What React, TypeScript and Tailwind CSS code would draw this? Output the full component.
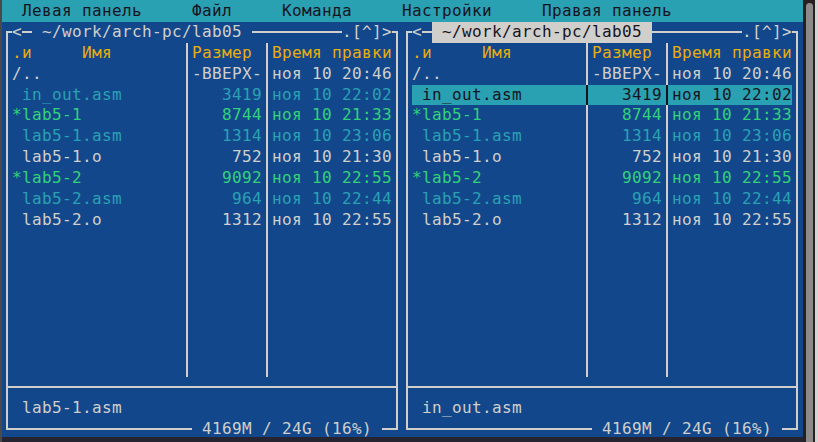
import React from "react";

type FileRow = { name: string; size: string; time: string; color: string };

const files: FileRow[] = [
  { name: "/..", size: "-ВВЕРХ-", time: "ноя 10 20:46", color: "text-[#D0CFCC]" },
  { name: " in_out.asm", size: "3419", time: "ноя 10 22:02", color: "text-[#2AA1B3]" },
  { name: "*lab5-1", size: "8744", time: "ноя 10 21:33", color: "text-[#33D17A]" },
  { name: " lab5-1.asm", size: "1314", time: "ноя 10 23:06", color: "text-[#2AA1B3]" },
  { name: " lab5-1.o", size: "752", time: "ноя 10 21:30", color: "text-[#D0CFCC]" },
  { name: "*lab5-2", size: "9092", time: "ноя 10 22:55", color: "text-[#33D17A]" },
  { name: " lab5-2.asm", size: "964", time: "ноя 10 22:44", color: "text-[#2AA1B3]" },
  { name: " lab5-2.o", size: "1312", time: "ноя 10 22:55", color: "text-[#D0CFCC]" },
];

function Sep({ dark }: { dark?: boolean }) {
  return (
    <div className="w-[10px] shrink-0 flex justify-center">
      <div className={dark ? "w-[2px] h-full bg-[#171421]" : "w-[2px] h-full bg-[#D0CFCC]"} />
    </div>
  );
}

function Row({
  name,
  size,
  time,
  color,
  cursor,
}: {
  name: string;
  size: string;
  time: string;
  color: string;
  cursor?: boolean;
}) {
  return (
    <div
      className={
        cursor
          ? "flex h-[20.9px] shrink-0 bg-[#2AA1B3] text-[#171421]"
          : `flex h-[20.9px] shrink-0 ${color}`
      }
    >
      <div className="w-[170px] shrink-0 whitespace-pre overflow-hidden">{name}</div>
      <Sep dark={cursor} />
      <div className="w-[70px] shrink-0 whitespace-pre text-right overflow-hidden">{size}</div>
      <Sep dark={cursor} />
      <div className="w-[120px] shrink-0 whitespace-pre overflow-hidden">{time}</div>
    </div>
  );
}

function Panel({ active, mini }: { active?: boolean; mini: string }) {
  const empty = Array.from({ length: 7 });
  return (
    <div className="w-[400px] shrink-0 h-full pt-[9.5px] pb-[6.5px] px-[4px] flex overflow-hidden">
      <div className="flex-1 border-2 border-[#D0CFCC] px-[4px] flex flex-col">
        {/* title on top border */}
        <div className="flex h-[20.9px] -mt-[11.5px] shrink-0 text-[#D0CFCC]">
          <span className="w-[10px] shrink-0 bg-[#12488B]">&lt;</span>
          <span className="w-[10px] shrink-0" />
          <span
            className={
              active
                ? "w-[220px] shrink-0 whitespace-pre bg-[#D0CFCC] text-[#171421]"
                : "w-[220px] shrink-0 whitespace-pre bg-[#12488B]"
            }
          >
            {" ~/work/arch-pc/lab05 "}
          </span>
          <span className="flex-1" />
          <span className="w-[50px] shrink-0 whitespace-pre bg-[#12488B]">.[^]&gt;</span>
        </div>
        {/* header */}
        <div className="flex h-[20.9px] shrink-0 text-[#E9AD0C]">
          <div className="w-[170px] shrink-0 flex">
            <span className="w-[70px] shrink-0">.и</span>
            <span>Имя</span>
          </div>
          <Sep />
          <div className="w-[70px] shrink-0 whitespace-pre">Размер</div>
          <Sep />
          <div className="w-[120px] shrink-0 whitespace-pre">Время правки</div>
        </div>
        {files.map((f, i) => (
          <Row key={i} {...f} cursor={active && i === 1} />
        ))}
        {empty.map((_, i) => (
          <Row key={"e" + i} name="" size="" time="" color="text-[#D0CFCC]" />
        ))}
        {/* separator */}
        <div className="h-[20.9px] shrink-0 -mx-[4px] flex items-center">
          <div className="h-[2px] w-full bg-[#D0CFCC]" />
        </div>
        {/* mini status */}
        <div className="h-[20.9px] shrink-0 pl-[10px] text-[#D0CFCC]">{mini}</div>
        {/* bottom border info */}
        <div className="flex h-[20.9px] -mb-[11.5px] shrink-0 text-[#D0CFCC]">
          <span className="flex-1" />
          <span className="w-[190px] shrink-0 whitespace-pre bg-[#12488B]">{" 4169M / 24G (16%) "}</span>
          <span className="w-[10px] shrink-0" />
        </div>
      </div>
    </div>
  );
}

export default function App() {
  return (
    <div className="w-[818px] h-[442px] overflow-hidden flex bg-[#3b3b3b] font-['DejaVu_Sans_Mono',monospace] text-[16px] tracking-[0.37px] leading-[20.9px]">
      <div className="w-[2px] shrink-0 bg-[#4a4a4a]" />
      <div className="w-[801px] shrink-0 flex flex-col">
        <div className="h-[21.9px] shrink-0 pt-[1px] pl-[20px] flex bg-[#2AA1B3] text-[#171421]">
          <span className="w-[170px] shrink-0">Левая панель</span>
          <span className="w-[90px] shrink-0">Файл</span>
          <span className="w-[120px] shrink-0">Команда</span>
          <span className="w-[140px] shrink-0">Настройки</span>
          <span>Правая панель</span>
        </div>
        <div className="h-[415.1px] shrink-0 flex bg-[#12488B]">
          <Panel mini="lab5-1.asm" />
          <Panel active mini="in_out.asm" />
        </div>
        <div className="flex-1 bg-[#262430]" />
      </div>
      <div className="w-[12px] shrink-0 bg-[#26211e] pl-[3px] pt-[3px]">
        <div className="w-[7px] h-[470px] rounded-full bg-[#8d8b89]" />
      </div>
      <div className="w-[3px] shrink-0 bg-[#d4d4d4]" />
    </div>
  );
}
